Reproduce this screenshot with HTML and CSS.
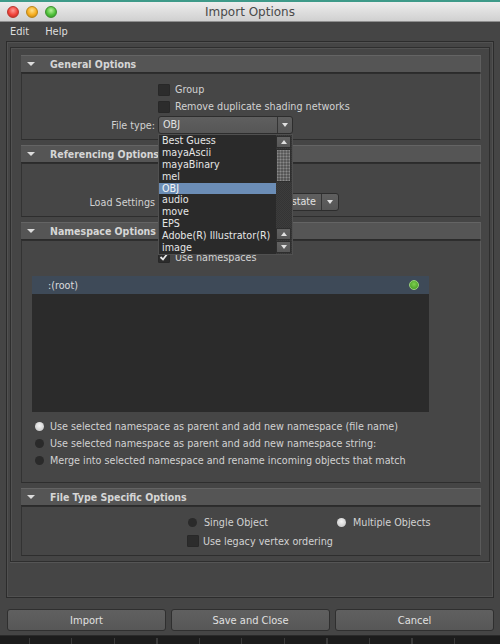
FILE: index.html
```html
<!DOCTYPE html>
<html>
<head>
<meta charset="utf-8">
<link rel="stylesheet" href="styles.css">
</head>
<body>
<div class="window">
  <div class="titlebar">
    <div class="lights"><span class="light red"></span><span class="light yellow"></span><span class="light green"></span></div>
    <div class="title">Import Options</div>
    <div></div>
  </div>
  <div class="menubar"><span>Edit</span><span>Help</span></div>
  <div class="frame">
    <div class="container">
      <section class="sec">
        <div class="sec-head"><span class="tri"></span>General Options</div>
        <div class="sec-body gen">
          <div class="row cbrow"><span class="cb"></span><span>Group</span></div>
          <div class="row cbrow"><span class="cb"></span><span>Remove duplicate shading networks</span></div>
          <div class="row ddrow"><span class="lbl">File type:</span>
            <div class="dd ft"><span class="dd-text">OBJ</span><span class="dd-arrow"><span class="down"></span></span></div>
          </div>
        </div>
      </section>
      <section class="sec">
        <div class="sec-head"><span class="tri"></span>Referencing Options</div>
        <div class="sec-body ref">
          <div class="row ddrow"><span class="lbl">Load Settings</span>
            <div class="dd ls"><span class="dd-text ls-text">Load saved reference state</span><span class="dd-arrow wide"><span class="down"></span></span></div>
          </div>
        </div>
      </section>
      <section class="sec">
        <div class="sec-head"><span class="tri"></span>Namespace Options</div>
        <div class="sec-body ns">
          <div class="row cbrow nsrow"><span class="cb checked"><svg width="10" height="10" viewBox="0 0 10 10"><polyline points="1.5,5 4,7.5 8.5,1.5" fill="none" stroke="#e6e6e6" stroke-width="1.8"/></svg></span><span>Use namespaces</span></div>
          <div class="tree">
            <div class="tree-row"><span>:(root)</span><span class="gdot"></span></div>
          </div>
          <div class="radios">
            <div class="rrow"><span class="radio on"></span><span>Use selected namespace as parent and add new namespace (file name)</span></div>
            <div class="rrow"><span class="radio"></span><span>Use selected namespace as parent and add new namespace string:</span></div>
            <div class="rrow"><span class="radio"></span><span>Merge into selected namespace and rename incoming objects that match</span></div>
          </div>
        </div>
      </section>
      <section class="sec">
        <div class="sec-head"><span class="tri"></span>File Type Specific Options</div>
        <div class="sec-body fts">
          <div class="row ftrow"><span class="opt first"><span class="radio"></span>Single Object</span><span class="opt"><span class="radio on"></span>Multiple Objects</span></div>
          <div class="row ftrow2"><span class="cb"></span><span>Use legacy vertex ordering</span></div>
        </div>
      </section>
    </div>
  </div>
  <div class="buttons">
    <div class="btn">Import</div>
    <div class="btn">Save and Close</div>
    <div class="btn">Cancel</div>
  </div>

  <div class="popup">
    <div class="items">
      <div class="item">Best Guess</div>
      <div class="item">mayaAscii</div>
      <div class="item">mayaBinary</div>
      <div class="item">mel</div>
      <div class="item sel">OBJ</div>
      <div class="item">audio</div>
      <div class="item">move</div>
      <div class="item">EPS</div>
      <div class="item">Adobe(R) Illustrator(R)</div>
      <div class="item">image</div>
    </div>
    <div class="sb">
      <div class="sb-btn"><span class="up"></span></div>
      <div class="sb-thumb"></div>
      <div class="sb-track"></div>
      <div class="sb-btn"><span class="up"></span></div>
      <div class="sb-btn"><span class="down"></span></div>
    </div>
  </div>
</div>
<div class="bottom-strip"></div>
</body>
</html>
```
FILE: styles.css
```css
* { box-sizing: border-box; }
html, body { margin: 0; padding: 0; }
body {
  width: 500px;
  height: 644px;
  overflow: hidden;
  background: #1f1f1f;
  font-family: "DejaVu Sans Condensed", "DejaVu Sans", sans-serif;
  font-size: 10.7px;
  color: #d2d2d2;
}
.window {
  position: relative;
  width: 500px;
  height: 636px;
  background: #454545;
  display: flex;
  flex-direction: column;
  border-bottom: 1px solid #2a2a2a;
}
.titlebar {
  height: 22px;
  flex: none;
  border-top: 2px solid #3e9a89;
  background: linear-gradient(#ededed, #d0d0d0);
  border-bottom: 1px solid #8e8e8e;
  display: grid;
  grid-template-columns: 1fr auto 1fr;
  align-items: center;
}
.lights { display: flex; gap: 7px; padding-left: 7px; }
.light { width: 12px; height: 12px; border-radius: 50%; }
.red { background: radial-gradient(circle at 50% 35%, #ff9a95 0, #f0423a 55%, #b02a22 100%); border: 1px solid #b7342c; }
.yellow { background: radial-gradient(circle at 50% 35%, #ffe08a 0, #f6ad1f 55%, #b37a12 100%); border: 1px solid #b98417; }
.green { background: radial-gradient(circle at 50% 35%, #b6f29a 0, #4fc03a 55%, #2b8a22 100%); border: 1px solid #3c8f2e; }
.title {
  font-family: "DejaVu Sans", sans-serif;
  font-size: 12px;
  color: #4a4a4a;
}
.menubar {
  height: 18px;
  flex: none;
  display: flex;
  align-items: center;
  gap: 16px;
  padding-left: 10px;
  font-size: 11px;
  color: #dedede;
}
.frame {
  flex: none;
  margin: 1px 6px 0;
  height: 557px;
  border: 1px solid #2c2c2c;
  box-shadow: inset 0 0 0 1px #515151;
  padding: 5px 3px;
}
.container {
  border: 1px solid #2e2e2e;
  box-shadow: inset 1px 1px 0 #525252, 0 1px 0 #555;
  padding: 7px 8px 5px 10px;
  display: flex;
  flex-direction: column;
  gap: 5px;
}
.sec-head {
  height: 18px;
  background: #555555;
  border-top: 1px solid #646464;
  border-bottom: 1px solid #2b2b2b;
  border-right: 1px solid #5e5e5e;
  display: flex;
  align-items: center;
  padding-left: 6px;
  font-size: 10.5px;
  font-weight: bold;
  color: #d6d6d6;
}
.tri {
  width: 0; height: 0;
  border-left: 4px solid transparent;
  border-right: 4px solid transparent;
  border-top: 4px solid #dcdcdc;
  margin-right: 15px;
}
.sec-body {
  background: #464646;
  border: 1px solid #2e2e2e;
  border-right-color: #5a5a5a;
  border-left-color: #333;
}
.gen { height: 67px; padding-top: 7px; }
.ref { height: 54px; padding-top: 28px; }
.ns { height: 243px; padding-top: 8px; }
.fts { height: 50px; padding-top: 7px; }

.row { display: flex; align-items: center; }
.cbrow { height: 17px; padding-left: 136px; }
.nsrow { height: 16px; }
.ddrow { height: 18px; margin-top: 1px; }
.lbl { width: 136px; text-align: right; padding-right: 3px; }
.cb {
  width: 12px; height: 12px;
  background: #2c2c2c;
  border: 1px solid #282828;
  border-radius: 1px;
  margin-right: 5px;
  display: flex; align-items: center; justify-content: center;
}
.cb svg { display: block; }
.dd {
  height: 18px;
  display: flex;
  background: linear-gradient(#5f5f5f, #565656);
  border: 1px solid #2d2d2d;
  border-radius: 3px;
  overflow: hidden;
}
.ft { width: 135px; }
.ls { width: 181px; }
.dd-text {
  flex: 1;
  padding-left: 4px;
  line-height: 16px;
  color: #e2e2e2;
  white-space: nowrap;
  overflow: hidden;
}
.ls-text { text-align: right; padding-right: 5px; }
.dd-arrow {
  width: 15px;
  border-left: 1px solid #343434;
  display: flex; align-items: center; justify-content: center;
}
.dd-arrow.wide { width: 17px; }
.down {
  width: 0; height: 0;
  border-left: 3.5px solid transparent;
  border-right: 3.5px solid transparent;
  border-top: 4px solid #e0e0e0;
}
.up {
  width: 0; height: 0;
  border-left: 3.5px solid transparent;
  border-right: 3.5px solid transparent;
  border-bottom: 4px solid #e0e0e0;
}
.tree {
  margin: 11px 0 0 10px;
  width: 397px;
  height: 136px;
  background: #2b2b2b;
}
.tree-row {
  height: 18px;
  background: #3e4a58;
  display: flex;
  align-items: center;
  justify-content: space-between;
  padding: 0 10px 0 16px;
  color: #dcdcdc;
}
.gdot {
  width: 10px; height: 10px; border-radius: 50%;
  background: radial-gradient(circle at 50% 40%, #7fd04e 0, #4fa42a 70%);
  border: 1px solid #9ad27a;
}
.radios { margin-top: 6px; }
.rrow { height: 17px; display: flex; align-items: center; padding-left: 13px; }
.radio {
  width: 9px; height: 9px; border-radius: 50%;
  background: #2a2a2a;
  margin-right: 6px;
  flex: none;
}
.radio.on { background: radial-gradient(circle at 50% 40%, #f4f4f4 0, #c9c9c9 80%); }
.ftrow { height: 16px; padding-left: 166px; }
.ftrow .radio { margin-right: 7px; }
.ftrow2 { height: 16px; margin-top: 3px; padding-left: 165px; }
.ftrow2 .cb { margin-right: 4px; }
.opt { display: flex; align-items: center; }
.opt.first { width: 149px; }

.buttons {
  flex: none;
  display: flex;
  gap: 5px;
  margin-top: 11px;
  padding: 0 6px 0 7px;
}
.btn {
  flex: 1;
  height: 22px;
  background: linear-gradient(#606060, #575757);
  border: 1px solid #2f2f2f;
  border-radius: 3px;
  color: #e0e0e0;
  font-size: 11px;
  display: flex; align-items: center; justify-content: center;
}

.popup {
  position: absolute;
  left: 158px;
  top: 134px;
  width: 135px;
  height: 121px;
  background: #2a2a2a;
  border: 1px solid #505050;
  display: flex;
}
.items { flex: 1; }
.item {
  height: 11.9px;
  line-height: 11.9px;
  padding-left: 3px;
  color: #e6e6e6;
  white-space: nowrap;
}
.item.sel { background: #6b8db6; color: #f4f4f4; }
.sb {
  width: 16px;
  display: flex;
  flex-direction: column;
  padding: 1px 1px 1px 0;
  background: repeating-conic-gradient(#343434 0 25%, #3c3c3c 0 50%) 0 0 / 2px 2px;
}
.sb-btn {
  height: 12px;
  background: linear-gradient(#626262, #575757);
  border: 1px solid #2e2e2e;
  display: flex; align-items: center; justify-content: center;
  flex: none;
}
.sb-btn + .sb-btn { margin-top: 1px; }
.sb-thumb {
  height: 33px;
  margin-top: 1px;
  background:
    radial-gradient(circle, #8a8a8a 0.8px, transparent 1.2px) 2px 5px / 3px 3px,
    linear-gradient(#5c5c5c, #545454);
  border: 1px solid #2e2e2e;
  flex: none;
}
.sb-track { flex: 1; }
.bottom-strip {
  height: 8px;
  background:
    repeating-linear-gradient(90deg, transparent 0 29px, #3a3a3a 29px 30px, transparent 30px 42.5px) 0 2px / 460px 6px no-repeat,
    #1c1c1c;
}
```
